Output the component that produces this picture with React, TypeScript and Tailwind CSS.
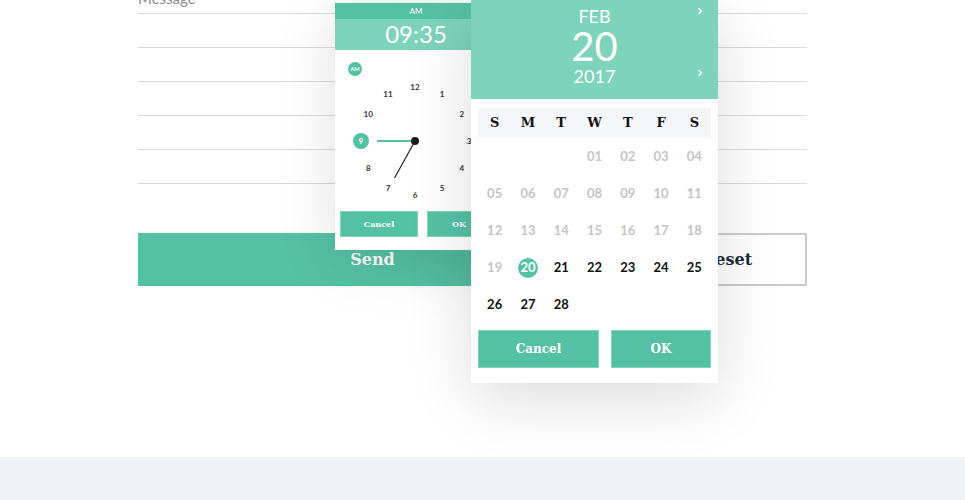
import React from "react";

const slab = "font-['DejaVu_Serif',serif] font-bold";

function Clock() {
  const cx = 80;
  const cy = 91;
  const r = 54;
  const nums = [12, 1, 2, 3, 4, 5, 6, 7, 8, 9, 10, 11];
  return (
    <svg width="162" height="161" viewBox="0 0 162 161" className="block">
      <circle cx="20" cy="19" r="7" fill="#55c1a4" />
      <text x="20" y="21" textAnchor="middle" fontSize="5.5" fill="#fff" fontFamily="Lato, sans-serif" fontWeight="700">
        AM
      </text>
      {nums.map((n, i) => {
        const a = (i * 30 * Math.PI) / 180;
        const x = cx + r * Math.sin(a);
        const y = cy - r * Math.cos(a);
        if (n === 9) return null;
        return (
          <text
            key={n}
            x={x}
            y={y + 3}
            textAnchor="middle"
            fontSize="8"
            fill="#333"
            fontFamily="Lato, sans-serif"
            fontWeight="700"
          >
            {n}
          </text>
        );
      })}
      <line x1="42" y1={cy} x2={cx} y2={cy} stroke="#55c1a4" strokeWidth="2" />
      <circle cx={cx - r} cy={cy} r="8" fill="#55c1a4" />
      <text x={cx - r} y={cy + 2.8} textAnchor="middle" fontSize="7.5" fill="#fff" fontFamily="Lato, sans-serif" fontWeight="700">
        9
      </text>
      <line x1={cx} y1={cy} x2="59.5" y2="128" stroke="#222" strokeWidth="1.2" />
      <circle cx={cx} cy={cy} r="4" fill="#1a1a1a" />
    </svg>
  );
}

function Chevron() {
  return (
    <svg width="6" height="8" viewBox="0 0 6 8">
      <polyline points="1.5,1.2 4.3,4 1.5,6.8" fill="none" stroke="#fff" strokeWidth="1.6" />
    </svg>
  );
}

export default function App() {
  const dows = ["S", "M", "T", "W", "T", "F", "S"];
  const cells: (number | null)[] = [null, null, null];
  for (let d = 1; d <= 28; d++) cells.push(d);

  return (
    <div className="relative flex h-[500px] w-[965px] flex-col overflow-hidden bg-white font-['Lato',sans-serif]">
      <div className="ml-[138px] w-[669px]">
        <div className="-mt-[10px] h-[24px] border-b border-[#dadada] text-[15px] leading-[16px] text-[#8a8a8a]">
          Message
        </div>
        <div className="h-[34px] border-b border-[#dadada]" />
        <div className="h-[34px] border-b border-[#dadada]" />
        <div className="h-[34px] border-b border-[#dadada]" />
        <div className="h-[34px] border-b border-[#dadada]" />
        <div className="h-[34px] border-b border-[#dadada]" />
        <div className="mt-[49px] flex gap-[40px]">
          <div className={`flex h-[53px] flex-1 items-center justify-center bg-[#55c1a4] text-[16px] text-white ${slab}`}>
            Send
          </div>
          <div className={`flex h-[53px] w-[160px] items-center justify-center border-2 border-[#cccccc] text-[16px] text-[#1c2b3b] ${slab}`}>
            Reset
          </div>
        </div>
      </div>
      <div className="mt-auto h-[43px] bg-[#f1f2f7]" />

      {/* Time picker */}
      <div className="absolute left-[335px] top-[3px] z-10 w-[162px] bg-white shadow-[0_10px_60px_rgba(0,0,0,0.13)]">
        <div className="flex h-[16px] items-center justify-center bg-[#55c1a4] text-[8px] leading-none text-white">AM</div>
        <div className="h-[31px] bg-[#7dd3bb] text-center text-[24px] font-normal leading-[30px] text-white">09:35</div>
        <Clock />
        <div className="flex gap-[9px] px-[5px] pb-[13px]">
          <div className={`flex h-[26px] w-[78px] shrink-0 items-center justify-center border border-[#7fd6bd] bg-[#55c1a4] text-[8px] text-white ${slab}`}>
            Cancel
          </div>
          <div className={`flex h-[26px] w-[64px] shrink-0 items-center justify-center border border-[#7fd6bd] bg-[#55c1a4] text-[8px] text-white ${slab}`}>
            OK
          </div>
        </div>
      </div>

      {/* Date picker */}
      <div className="absolute left-[471px] top-0 z-20 w-[247px] bg-white pb-[15px] shadow-[0_15px_60px_rgba(0,0,0,0.14)]">
        <div className="relative flex h-[99px] flex-col items-center bg-[#7dd3bb] text-white">
          <div className="pt-[7px] text-[18px] leading-[18px]">FEB</div>
          <div className="mt-[1px] text-[40px] leading-[40px]">20</div>
          <div className="mt-[1px] text-[18px] leading-[18px]">2017</div>
          <div className="absolute left-[226px] top-[7px]">
            <Chevron />
          </div>
          <div className="absolute left-[226px] top-[69px]">
            <Chevron />
          </div>
        </div>
        <div className={`mx-[7px] mt-[9px] grid h-[30px] grid-cols-7 items-center bg-[#f5f6fa] text-center text-[13px] text-[#111] ${slab}`}>
          {dows.map((d, i) => (
            <div key={i}>{d}</div>
          ))}
        </div>
        <div className="mx-[7px] grid grid-cols-7">
          {cells.map((d, i) => (
            <div key={i} className="flex h-[37px] items-center justify-center text-[13px] font-bold">
              {d === null ? null : d === 20 ? (
                <span className="flex h-[20px] w-[20px] items-center justify-center rounded-full bg-[#55c1a4] text-white">20</span>
              ) : (
                <span className={d < 20 ? "text-[#c4c4c4]" : "text-[#111]"}>{String(d).padStart(2, "0")}</span>
              )}
            </div>
          ))}
        </div>
        <div className="mx-[7px] mt-[7px] flex justify-between">
          <div className={`flex h-[38px] w-[121px] items-center justify-center border border-[#7fd6bd] bg-[#55c1a4] text-[12px] text-white ${slab}`}>
            Cancel
          </div>
          <div className={`flex h-[38px] w-[100px] items-center justify-center border border-[#7fd6bd] bg-[#55c1a4] text-[12px] text-white ${slab}`}>
            OK
          </div>
        </div>
      </div>
    </div>
  );
}
